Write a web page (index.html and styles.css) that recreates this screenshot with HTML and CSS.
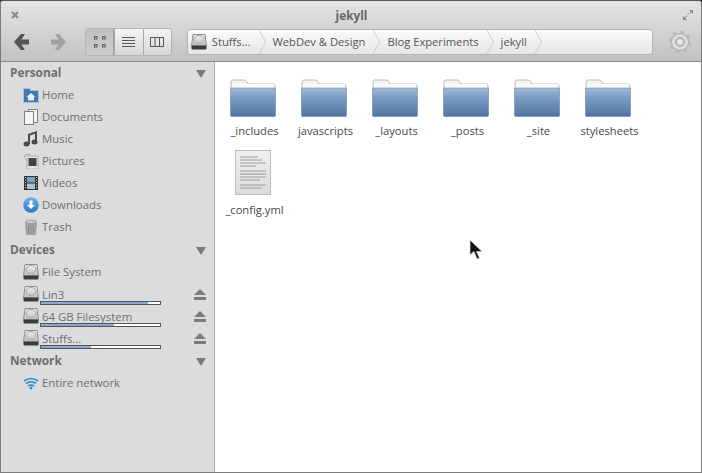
FILE: index.html
```html
<!DOCTYPE html>
<html>
<head>
  <title>jekyll</title>
  <meta name="viewport" content="width=device-width, initial-scale=1.0">
  <link rel="stylesheet" href="styles.css">
</head>
<body>
  <svg class="defs" width="0" height="0">
    <defs>
      <linearGradient id="folder-front" x1="0" y1="0" x2="0" y2="1">
        <stop offset="0" stop-color="#a3bcd8"/>
        <stop offset="0.3" stop-color="#7d9fc6"/>
        <stop offset="1" stop-color="#4f749f"/>
      </linearGradient>
      <linearGradient id="disk-body" x1="0" y1="0" x2="0" y2="1">
        <stop offset="0" stop-color="#f0f0f0"/>
        <stop offset="1" stop-color="#bdbdbd"/>
      </linearGradient>
      <linearGradient id="page" x1="0" y1="0" x2="0" y2="1">
        <stop offset="0" stop-color="#f0f0f0"/>
        <stop offset="1" stop-color="#dcdcdc"/>
      </linearGradient>
      <linearGradient id="blue-ball" x1="0" y1="0" x2="0" y2="1">
        <stop offset="0" stop-color="#6db3ea"/>
        <stop offset="1" stop-color="#2a74c4"/>
      </linearGradient>
      <symbol id="disk" viewBox="0 0 16 16">
        <path d="M2 .5h12l1.500 11.500H.5z" fill="url(#disk-body)" stroke="#8e8e8e"/>
        <ellipse cx="8" cy="5.500" rx="5" ry="4" fill="none" stroke="#a8a8a8"/>
        <rect x=".5" y="11.500" width="15" height="4" rx="1" fill="#3c3c3c"/>
      </symbol>
      <symbol id="eject" viewBox="0 0 14 13">
        <path d="M7 1l6 6H1z" fill="#7b7b7b"/>
        <rect x="1" y="9" width="12" height="3" fill="#7b7b7b"/>
      </symbol>
      <symbol id="folder" viewBox="0 0 46 38">
        <path d="M1 8V3q0-2 2-2h11q2 0 3 2l1 2h25q2 0 2 2v3H1z" fill="#f2f2f2" stroke="#bdbdbd"/>
        <rect x="2" y="5" width="42" height="4" fill="#fbfbfb"/>
        <path d="M.5 9h45v27.500q0 1-1 1h-43q-1 0-1-1z" fill="url(#folder-front)" stroke="#6c88a8" stroke-width=".6"/>
      </symbol>
    </defs>
  </svg>

  <div class="window">
    <header class="toolbar">
      <div class="titlebar">
        <svg width="10" height="10" viewBox="0 0 10 10"><path d="M2 2l6 6M8 2l-6 6" stroke="#8a8a8a" stroke-width="2.200"/></svg>
        <span class="title">jekyll</span>
        <svg class="win-max" width="10" height="10" viewBox="0 0 10 10"><path d="M6 0h4v4zM0 10V6l4 4z" fill="#8a8a8a"/><path d="M8 2L5.500 4.500M2 8l2.500-2.500" stroke="#8a8a8a"/></svg>
      </div>
      <div class="controls">
        <svg class="nav-btn" width="15" height="16" viewBox="0 0 15 16"><path d="M7 0L0 8l7 8h4L7.500 10.500H15v-5H7.500L11 0z" fill="#555555"/></svg>
        <svg class="nav-btn nav-next" width="15" height="16" viewBox="0 0 15 16"><path d="M8 0l7 8-7 8H4l3.500-5.500H0v-5h7.500L4 0z" fill="#a2a2a2"/></svg>
        <div class="view-switch">
          <button class="view-btn active">
            <svg width="12" height="12" viewBox="0 0 12 12" fill="none" stroke="#5a5a5a"><rect x=".5" y=".5" width="2.500" height="2.500"/><rect x="8.500" y=".5" width="2.500" height="2.500"/><rect x=".5" y="8.500" width="2.500" height="2.500"/><rect x="8.500" y="8.500" width="2.500" height="2.500"/></svg>
          </button>
          <button class="view-btn">
            <svg width="13" height="11" viewBox="0 0 13 11" stroke="#5a5a5a"><path d="M0 .5h13M0 3.500h13M0 6.500h13M0 9.500h13"/></svg>
          </button>
          <button class="view-btn">
            <svg width="14" height="11" viewBox="0 0 14 11" fill="none" stroke="#5a5a5a"><rect x=".5" y=".5" width="13" height="9"/><path d="M5 .5v9M9.500 .5v9"/></svg>
          </button>
        </div>
        <nav class="pathbar">
          <div class="crumb crumb-first">
            <svg width="16" height="16"><use href="#disk"/></svg>
            <span>Stuffs...</span>
          </div>
          <div class="crumb">WebDev &amp; Design</div>
          <div class="crumb">Blog Experiments</div>
          <div class="crumb">jekyll</div>
        </nav>
        <svg class="gear" width="24" height="24" viewBox="0 0 24 24">
          <circle cx="12" cy="12" r="10" fill="none" stroke="#bcbcbc" stroke-width="3" stroke-dasharray="4 3.850"/>
          <circle cx="12" cy="12" r="8.500" fill="#dedede" stroke="#a8a8a8"/>
          <circle cx="12" cy="12" r="4.500" fill="#c8c8c8" stroke="#a0a0a0"/>
          <circle cx="12" cy="12" r="2.500" fill="#ebebeb"/>
        </svg>
      </div>
    </header>

    <div class="body">
      <aside class="sidebar">
        <div class="section-head head-first"><span>Personal</span><i class="arrow"></i></div>
        <div class="place">
          <svg width="16" height="16" viewBox="0 0 16 16"><path d="M.5 1.500h6l1 2h8v12H.5z" fill="#3f7ab5" stroke="#a7c0d8"/><path d="M8 6l4.500 4H11v3.500H5V10H3.500z" fill="#e6eef6"/></svg>
          <span>Home</span>
        </div>
        <div class="place">
          <svg width="16" height="16" viewBox="0 0 16 16" fill="#f4f4f4" stroke="#7d7d7d"><rect x="5.500" y=".5" width="9" height="13"/><rect x="1.500" y="2.500" width="9" height="13"/></svg>
          <span>Documents</span>
        </div>
        <div class="place">
          <svg width="16" height="16" viewBox="0 0 16 16" fill="#4a4a4a"><path d="M5 3l9-3v2L7 4.500V13H5zM12 1h2v10h-2z"/><ellipse cx="3.500" cy="13" rx="3" ry="2.500"/><ellipse cx="11.500" cy="11" rx="3" ry="2.500"/></svg>
          <span>Music</span>
        </div>
        <div class="place">
          <svg width="16" height="16" viewBox="0 0 16 16"><path d="M1 3l5-2 2 4-4 3z" fill="#eeeeee" stroke="#888888" stroke-width=".7"/><rect x="4" y="3" width="11" height="13" fill="#e8e8e8" stroke="#999999" stroke-width=".7"/><rect x="5.500" y="5" width="8" height="8" fill="#45463d"/></svg>
          <span>Pictures</span>
        </div>
        <div class="place">
          <svg width="16" height="16" viewBox="0 0 16 16"><rect x="1" y="1" width="14" height="14" fill="#333333"/><rect x="4" y="2" width="8" height="5.500" fill="#7fa3b8"/><rect x="4" y="8.500" width="8" height="5.500" fill="#a6c2cf"/><path d="M2 2.500h1M2 5h1M2 7.500h1M2 10h1M2 12.500h1M13 2.500h1M13 5h1M13 7.500h1M13 10h1M13 12.500h1" stroke="#dddddd"/></svg>
          <span>Videos</span>
        </div>
        <div class="place">
          <svg width="16" height="16" viewBox="0 0 16 16"><circle cx="8" cy="8" r="7.800" fill="url(#blue-ball)"/><path d="M6.500 3.500h3V8h2.500L8 12 4 8h2.500z" fill="#ffffff"/></svg>
          <span>Downloads</span>
        </div>
        <div class="place">
          <svg width="16" height="16" viewBox="0 0 16 16"><path d="M2.500 3h11l-1 12.500h-9z" fill="#a4a4a4" stroke="#8a8a8a" stroke-width=".6"/><ellipse cx="8" cy="2.800" rx="5.500" ry="1.800" fill="#cccccc" stroke="#8a8a8a" stroke-width=".6"/><path d="M5.500 6v8M8 6v8M10.500 6v8" stroke="#8c8c8c"/></svg>
          <span>Trash</span>
        </div>

        <div class="section-head"><span>Devices</span><i class="arrow"></i></div>
        <div class="place">
          <svg width="16" height="16"><use href="#disk"/></svg>
          <span>File System</span>
        </div>
        <div class="place">
          <svg width="16" height="16"><use href="#disk"/></svg>
          <div class="volume">
            <span>Lin3</span>
            <div class="usage"><div class="usage-fill" style="width: 90%"></div></div>
          </div>
          <svg class="eject" width="14" height="13"><use href="#eject"/></svg>
        </div>
        <div class="place">
          <svg width="16" height="16"><use href="#disk"/></svg>
          <div class="volume">
            <span>64 GB Filesystem</span>
            <div class="usage"><div class="usage-fill" style="width: 61%"></div></div>
          </div>
          <svg class="eject" width="14" height="13"><use href="#eject"/></svg>
        </div>
        <div class="place">
          <svg width="16" height="16"><use href="#disk"/></svg>
          <div class="volume">
            <span>Stuffs...</span>
            <div class="usage"><div class="usage-fill" style="width: 42%"></div></div>
          </div>
          <svg class="eject" width="14" height="13"><use href="#eject"/></svg>
        </div>

        <div class="section-head"><span>Network</span><i class="arrow"></i></div>
        <div class="place">
          <svg width="16" height="16" viewBox="0 0 16 16" fill="none" stroke="#2b86c9" stroke-width="1.600"><path d="M1 6q7-5 14 0M3 8.500q5-3.500 10 0M5 11q3-2 6 0"/><circle cx="8" cy="13" r="1.400" fill="#2b86c9" stroke="none"/></svg>
          <span>Entire network</span>
        </div>
      </aside>

      <main class="files">
        <div class="file"><svg class="folder-icon" width="46" height="38"><use href="#folder"/></svg><span>_includes</span></div>
        <div class="file"><svg class="folder-icon" width="46" height="38"><use href="#folder"/></svg><span>javascripts</span></div>
        <div class="file"><svg class="folder-icon" width="46" height="38"><use href="#folder"/></svg><span>_layouts</span></div>
        <div class="file"><svg class="folder-icon" width="46" height="38"><use href="#folder"/></svg><span>_posts</span></div>
        <div class="file"><svg class="folder-icon" width="46" height="38"><use href="#folder"/></svg><span>_site</span></div>
        <div class="file"><svg class="folder-icon" width="46" height="38"><use href="#folder"/></svg><span>stylesheets</span></div>
        <div class="file">
          <svg class="doc-icon" width="36" height="45" viewBox="0 0 36 45">
            <rect x=".5" y=".5" width="35" height="44" fill="url(#page)" stroke="#bcbcbc"/>
            <path d="M5 7h18M5 10h22M5 13h26M5 16h16M5 21h26M5 24h26M5 27h26M5 30h20M5 35h26M5 38h22" stroke="#9c9c9c"/>
          </svg>
          <span>_config.yml</span>
        </div>
      </main>
    </div>

    <svg class="cursor" width="14" height="21" viewBox="0 0 14 21"><path d="M1 1v15l4-3.500L8 20l2.500-1-3-6.500H13z" fill="#111111" stroke="#dddddd" stroke-width=".7"/></svg>
  </div>
</body>
</html>
```

FILE: styles.css
```css
* {
  box-sizing: border-box;
}
html, body {
  margin: 0;
  padding: 0;
  height: 100%;
}
body {
  background-color: #3a3a3a;
  font-family: "Open Sans", "Noto Sans", sans-serif;
  font-size: 11.4px;
  overflow: hidden;
}
.defs {
  position: absolute;
}
.window {
  position: relative;
  display: flex;
  flex-direction: column;
  height: 473px;
  border: 1px solid #7c7c7c;
  border-top-color: #555;
  border-radius: 4px 4px 0 0;
  background-color: #fff;
  overflow: hidden;
}

.toolbar {
  height: 61px;
  flex: none;
  background: linear-gradient(#e4e4e4, #c2c2c2);
  border-bottom: 1px solid #8a8a8a;
  padding: 0 9px;
}
.titlebar {
  display: flex;
  justify-content: space-between;
  align-items: center;
  height: 27px;
}
.title {
  font-size: 11.8px;
  font-weight: bold;
  color: #666;
}
.win-max {
  margin-right: -1px;
}
.controls {
  display: flex;
  align-items: center;
  height: 28px;
}
.nav-btn {
  margin-left: 4px;
}
.nav-next {
  margin-left: 22px;
}
.view-switch {
  display: flex;
  margin-left: 19px;
  height: 28px;
  border: 1px solid #b4b4b4;
  border-radius: 3px;
  background: linear-gradient(#f4f4f4, #d6d6d6);
}
.view-btn {
  width: 28.3px;
  display: flex;
  align-items: center;
  justify-content: center;
  padding: 0;
  border: 0;
  border-left: 1px solid #a8a8a8;
  background: transparent;
}
.view-btn:first-child {
  border-left: 0;
}
.view-btn.active {
  background: linear-gradient(#c0c0c0, #cccccc);
  border-right: 1px solid #a0a0a0;
}
.pathbar {
  display: flex;
  align-items: center;
  width: 467px;
  height: 26px;
  margin-left: 15px;
  border: 1px solid #b4b4b4;
  border-radius: 3px;
  background: linear-gradient(#fbfbfb, #e6e6e6);
  font-size: 11.2px;
  color: #555;
}
.crumb {
  position: relative;
  display: flex;
  align-items: center;
  gap: 5px;
  height: 100%;
  padding: 0 11px 1px;
  white-space: nowrap;
}
.crumb::after {
  content: "";
  position: absolute;
  top: 3px;
  right: -6px;
  width: 17px;
  height: 17px;
  border-top: 1px solid #c4c4c4;
  border-right: 1px solid #c4c4c4;
  transform: scaleX(.55) rotate(45deg);
}
.crumb-first {
  padding-left: 3px;
}
.gear {
  margin-left: 15px;
}

.body {
  flex: 1;
  display: flex;
  min-height: 0;
}
.sidebar {
  flex: none;
  width: 214px;
  padding: 0 7px 0 9px;
  background-color: #dcdcdc;
  border-right: 1px solid #a6a6a6;
  color: #6e6e6e;
}
.section-head {
  display: flex;
  align-items: center;
  justify-content: space-between;
  height: 23px;
  padding: 0 1px 1px 0;
  font-size: 11.8px;
  font-weight: bold;
}
.head-first {
  height: 22px;
  padding-bottom: 2px;
}
.arrow {
  width: 0;
  height: 0;
  margin-top: 3px;
  border-left: 5.5px solid transparent;
  border-right: 5.5px solid transparent;
  border-top: 8px solid #7b7b7b;
}
.place {
  display: flex;
  align-items: center;
  gap: 3px;
  height: 22px;
  padding-left: 13px;
}
.place > span {
  margin-top: -2px;
}
.volume {
  display: flex;
  flex-direction: column;
  flex: 1;
  height: 22px;
  padding-top: 5px;
  line-height: 13px;
}
.usage {
  width: 121px;
  height: 4px;
  margin-left: -2px;
  background-color: #fff;
  border: 1px solid #555;
}
.usage-fill {
  height: 100%;
  background-color: #8aaad2;
}
.eject {
  flex: none;
}

.files {
  flex: 1;
  display: grid;
  grid-template-columns: repeat(6, 71px);
  grid-auto-rows: 72px;
  row-gap: 7px;
  padding: 16px 0 0 2px;
  font-size: 11.2px;
  color: #484848;
}
.file {
  display: flex;
  flex-direction: column;
  align-items: center;
}
.folder-icon {
  flex: none;
  margin-top: 1px;
}
.file span {
  margin-top: 5px;
  padding-left: 4px;
  line-height: 17px;
}
.doc-icon {
  flex: none;
  margin-top: -7px;
}
.doc-icon + span {
  margin-top: 6px;
}

.cursor {
  position: absolute;
  left: 468px;
  top: 238px;
}
```
